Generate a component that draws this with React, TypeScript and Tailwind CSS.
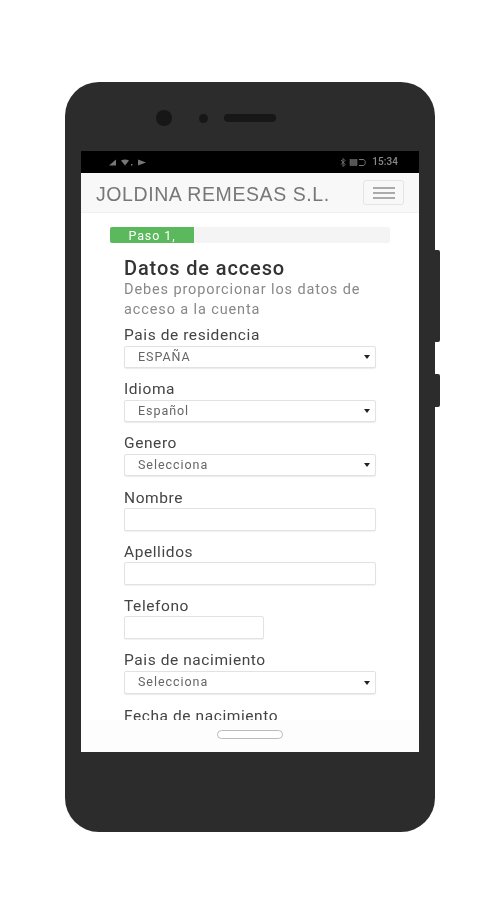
const font = "font-['Roboto',sans-serif]"

function Label({ children }: { children: string }) {
  return <label className="block h-[18px] text-[15.5px] leading-[20px] tracking-[0.58px] text-[#444]">{children}</label>
}

function SelectField({ label, value, tall }: { label: string; value: string; tall?: boolean }) {
  return (
    <div>
      <Label>{label}</Label>
      <div
        className={`mt-[3px] flex w-[252px] items-center justify-between rounded-[2px] border border-[#e2e2e2] bg-white pl-[13px] pr-[4px] shadow-[0_1px_1px_rgba(0,0,0,0.08)] ${
          tall ? 'h-[23px]' : 'h-[22px]'
        }`}
      >
        <span className="text-[12.5px] tracking-[0.95px] text-[#666]">{value}</span>
        <svg width="6" height="4" viewBox="0 0 6 4" className="mr-[1px]">
          <path d="M0 0h6L3 4z" fill="#222" />
        </svg>
      </div>
    </div>
  )
}

function InputField({ label, short }: { label: string; short?: boolean }) {
  return (
    <div>
      <Label>{label}</Label>
      <input
        className={`mt-[2px] block h-[23px] rounded-[2px] border border-[#e2e2e2] bg-white shadow-[0_1px_1px_rgba(0,0,0,0.06)] ${
          short ? 'w-[140px]' : 'w-[252px]'
        }`}
      />
    </div>
  )
}

function StatusBar() {
  return (
    <div className="flex h-[22px] items-center justify-between bg-black pl-[28px] pr-[21px]">
      <svg width="38" height="7" viewBox="0 0 38 7" fill="#777">
        <path d="M0 6.500L7 .5v6z" />
        <path d="M12 1.500c2.500-1.300 5.500-1.300 8 0L16 6.500z" />
        <rect x="22" y="5" width="1.500" height="1.500" />
        <path d="M29 .5l8 3-8 3z" />
      </svg>
      <div className="flex items-center gap-[3px]">
        <svg width="29" height="9" viewBox="0 0 29 9" fill="none" stroke="#777">
          <path d="M1 2l4 4.500-2 2V.5l2 2-4 4" strokeWidth="0.9" />
          <rect x="10" y="1.500" width="7" height="6" fill="#555" strokeWidth="0.5" />
          <path d="M19 1.500h4c3 0 3 6 0 6h-4" strokeWidth="1" />
        </svg>
        <span className="text-[10px] leading-none font-medium tracking-[0.1px] text-[#888]">15:34</span>
      </div>
    </div>
  )
}

export default function App() {
  return (
    <div className={`h-[900px] w-[499px] overflow-hidden bg-white pt-[82px] pl-[65px] ${font}`}>
      <div className="relative flex h-[750px] w-[370px] flex-col rounded-[34px] bg-[#2c2c2c] px-[16px] blur-[0.7px]">
        {/* 側面ボタン */}
        <div className="absolute top-[168px] left-[370px] h-[92px] w-[5px] rounded-r-[2px] bg-[#2c2c2c]" />
        <div className="absolute top-[292px] left-[370px] h-[33px] w-[5px] rounded-r-[2px] bg-[#2c2c2c]" />

        {/* 上部ベゼル */}
        <div className="flex h-[69px] shrink-0 items-center pt-[3px] pl-[75px]">
          <div className="h-[16px] w-[16px] rounded-full bg-[#171717]" />
          <div className="ml-[27px] h-[9px] w-[9px] rounded-full bg-[#171717]" />
          <div className="ml-[16px] h-[8px] w-[52px] rounded-full bg-[#171717]" />
        </div>

        {/* 画面 */}
        <div className="relative flex h-[601px] w-[338px] flex-col overflow-hidden bg-white">
          <StatusBar />
          <div className="flex h-[40px] shrink-0 items-center justify-between border-b border-[#f0f0f0] bg-[#f8f8f8] pr-[15px] pl-[15px]">
            <span className="pt-[4px] font-['Liberation_Sans',sans-serif] text-[19.5px] tracking-[0.58px] text-[#777]">
              JOLDINA REMESAS S.L.
            </span>
            <div className="flex h-[25px] w-[41px] flex-col items-center justify-center gap-[3px] rounded-[3px] border border-[#e4e4e4]">
              <span className="h-[2px] w-[22px] bg-[#aaa]" />
              <span className="h-[2px] w-[22px] bg-[#aaa]" />
              <span className="h-[2px] w-[22px] bg-[#aaa]" />
            </div>
          </div>

          <div className="pt-[14px] pl-[29px]">
            <div className="h-[16px] w-[280px] overflow-hidden rounded-[2px] bg-[#f4f4f4]">
              <div className="flex h-full w-[84px] items-center justify-center bg-[#5cb85c] pt-[3px] text-[12.5px] tracking-[0.9px] text-white">
                Paso 1,
              </div>
            </div>
          </div>

          <div className="flex flex-col pt-[14px] pl-[43px]">
            <h1 className="text-[20px] leading-[22px] font-medium tracking-[0.88px] text-[#333]">Datos de acceso</h1>
            <p className="mt-[1px] w-[252px] text-[14.5px] leading-[20px] tracking-[0.88px] text-[#888]">
              Debes proporcionar los datos de acceso a la cuenta
            </p>
            <div className="mt-[5px] flex flex-col gap-[11.2px]">
              <SelectField label="Pais de residencia" value="ESPAÑA" />
              <SelectField label="Idioma" value="Español" />
              <SelectField label="Genero" value="Selecciona" />
              <InputField label="Nombre" />
              <InputField label="Apellidos" />
              <InputField label="Telefono" short />
              <SelectField label="Pais de nacimiento" value="Selecciona" tall />
              <div className="pt-[1px]">
                <Label>Fecha de nacimiento</Label>
              </div>
            </div>
          </div>

          {/* ホームバー */}
          <div className="absolute right-0 bottom-0 left-0 flex h-[32px] justify-center bg-[#fdfdfd] pt-[10px]">
            <div className="h-[9px] w-[66px] rounded-full border border-[#bbb] bg-white" />
          </div>
        </div>
      </div>
    </div>
  )
}
